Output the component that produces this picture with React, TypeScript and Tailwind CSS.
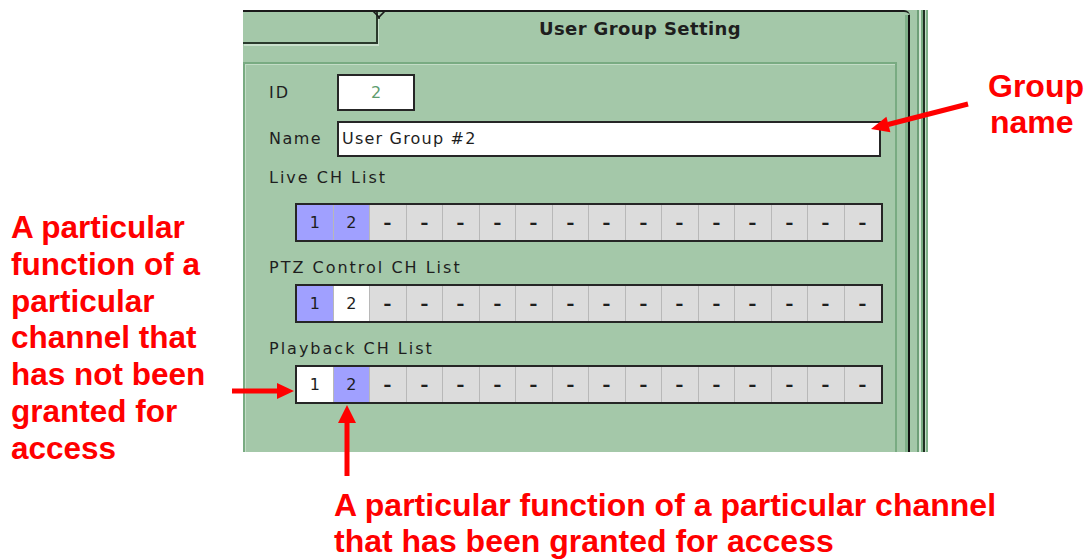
import React from "react";

const UI = { fontFamily: '"DejaVu Sans", Verdana, sans-serif' };
const RED = { fontFamily: '"Liberation Sans", Arial, Helvetica, sans-serif' };

type Cell = "on" | "off" | "none";

function ChGrid({ cells }: { cells: Cell[] }) {
  return (
    <div className="ml-[26px] w-[588px] border-2 border-[#262626] grid grid-cols-16 bg-[#dcdcdc]">
      {cells.map((c, i) => (
        <div
          key={i}
          className={
            "h-[35px] flex items-center justify-center text-[16px] text-[#1e1e1e] " +
            (i < 15 ? "border-r border-[#b8b8b8] " : "") +
            (c === "on" ? "bg-[#a0a0ff]" : c === "off" ? "bg-white" : "bg-[#dcdcdc]")
          }
          style={UI}
        >
          {c === "none" ? <span className="font-bold scale-x-125 inline-block">-</span> : String(i + 1)}
        </div>
      ))}
    </div>
  );
}

function cellsOf(a: Cell, b: Cell): Cell[] {
  const arr: Cell[] = [a, b];
  for (let i = 0; i < 14; i++) arr.push("none");
  return arr;
}

function Label({ children, className = "" }: { children: React.ReactNode; className?: string }) {
  return (
    <div className={"h-[20px] leading-[20px] text-[16px] tracking-[2px] text-[#1e1e1e] " + className} style={UI}>
      {children}
    </div>
  );
}

function Panel() {
  return (
    <div className="mt-[10px] h-[442px] w-[685px] flex bg-[#a4c8a9]">
      {/* main tabbed area */}
      <div className="relative w-[667px] flex flex-col border-t-2 border-[#1a1a1a] rounded-tr-[6px]">
        <div className="absolute right-0 top-[3px] bottom-0 w-[5px] border-r-2 border-[#111] bg-[#7fb088]" />
        {/* tab strip */}
        <div className="relative h-[32px] flex">
          <div className="w-[135px] h-[32px] border-b-2 border-r-2 border-[#2a3a2c] shadow-[1px_2px_0_#c9e0cc]" />
          <div className="flex-1 flex justify-center pr-[8px]">
            <span className="text-[18px] font-bold leading-[36px] mt-[-1px] tracking-[0.4px] text-[#1e1e1e]" style={UI}>
              User Group Setting
            </span>
          </div>
          <svg className="absolute left-[128px] top-[-2px]" width="16" height="9" viewBox="0 0 16 9">
            <path d="M1 0 L8 7 L15 0" stroke="#1a1a1a" strokeWidth="1.6" fill="none" />
            <path d="M8 7 L8 9" stroke="#1a1a1a" strokeWidth="1.6" />
          </svg>
        </div>
        <div className="h-[18px]" />
        {/* inner panel */}
        <div className="flex-1 mr-[13px] border-l-2 border-t-2 border-r-2 border-[#79ab82] shadow-[inset_1px_1px_0_#c3dcc6] pl-[24px] pt-[10px]">
          <div className="flex items-center h-[37px]">
            <div className="w-[68px] text-[16px] tracking-[2px] text-[#1e1e1e]" style={UI}>ID</div>
            <div className="w-[78px] h-[37px] bg-white border-2 border-[#262626] flex items-center justify-center text-[16px] text-[#5e9c6e]" style={UI}>
              2
            </div>
          </div>
          <div className="flex items-center h-[36px] mt-[10px]">
            <div className="w-[68px] text-[16px] tracking-[1.5px] text-[#1e1e1e]" style={UI}>Name</div>
            <div className="w-[544px] h-[36px] bg-white border-2 border-[#262626] flex items-center pl-[3px] text-[16px] tracking-[1.2px] text-[#1e1e1e]" style={UI}>
              User Group #2
            </div>
          </div>
          <Label className="mt-[11px]">Live CH List</Label>
          <div className="mt-[15px]">
            <ChGrid cells={cellsOf("on", "on")} />
          </div>
          <Label className="mt-[16px]">PTZ Control CH List</Label>
          <div className="mt-[6px]">
            <ChGrid cells={cellsOf("on", "off")} />
          </div>
          <Label className="mt-[16px]">Playback CH List</Label>
          <div className="mt-[6px]">
            <ChGrid cells={cellsOf("off", "on")} />
          </div>
        </div>
      </div>
      {/* right edge stripes */}
      <div className="w-[18px] flex">
        <div className="w-[7px] bg-[#a4c8a9]" />
        <div className="w-[2px] bg-[#6e9f78]" />
        <div className="w-[2px] bg-[#d3e7d5]" />
        <div className="w-[2px] bg-[#79ab82]" />
        <div className="w-[2px] bg-[#1f2f22]" />
        <div className="w-[1px] bg-[#c3dcc6]" />
        <div className="w-[2px] bg-[#7fb088]" />
      </div>
    </div>
  );
}

export default function App() {
  return (
    <div className="relative w-[1085px] h-[560px] bg-white overflow-hidden">
      <div className="flex h-[452px]">
        <div className="w-[243px] pl-[11px] pt-[209px] text-[31.5px] font-bold leading-[36.8px] text-[#ff0000]" style={RED}>
          <div>A particular</div>
          <div>function of a</div>
          <div>particular</div>
          <div>channel that</div>
          <div>has not been</div>
          <div>granted for</div>
          <div>access</div>
        </div>
        <Panel />
        <div className="pl-[60px] pt-[68px] text-[32px] font-bold leading-[36px] text-[#ff0000]" style={RED}>
          <div>Group</div>
          <div className="pl-[2px]">name</div>
        </div>
      </div>
      <div className="pl-[334px] pt-[35px] text-[32px] font-bold leading-[36px] text-[#ff0000]" style={RED}>
        <div>A particular function of a particular channel</div>
        <div>that has been granted for access</div>
      </div>

      {/* annotation arrows */}
      <svg className="absolute left-0 top-0 pointer-events-none" width="1085" height="560" viewBox="0 0 1085 560">
        <line x1="968" y1="104" x2="888" y2="124.5" stroke="#ff0000" strokeWidth="5" />
        <polygon points="871,129 890.4,132.2 886.4,116.8" fill="#ff0000" />
        <line x1="232" y1="391" x2="279" y2="391" stroke="#ff0000" strokeWidth="5" />
        <polygon points="294,391 277,383 277,399" fill="#ff0000" />
        <line x1="347" y1="476" x2="347" y2="421" stroke="#ff0000" strokeWidth="5" />
        <polygon points="347,405 338,423 356,423" fill="#ff0000" />
      </svg>
    </div>
  );
}
